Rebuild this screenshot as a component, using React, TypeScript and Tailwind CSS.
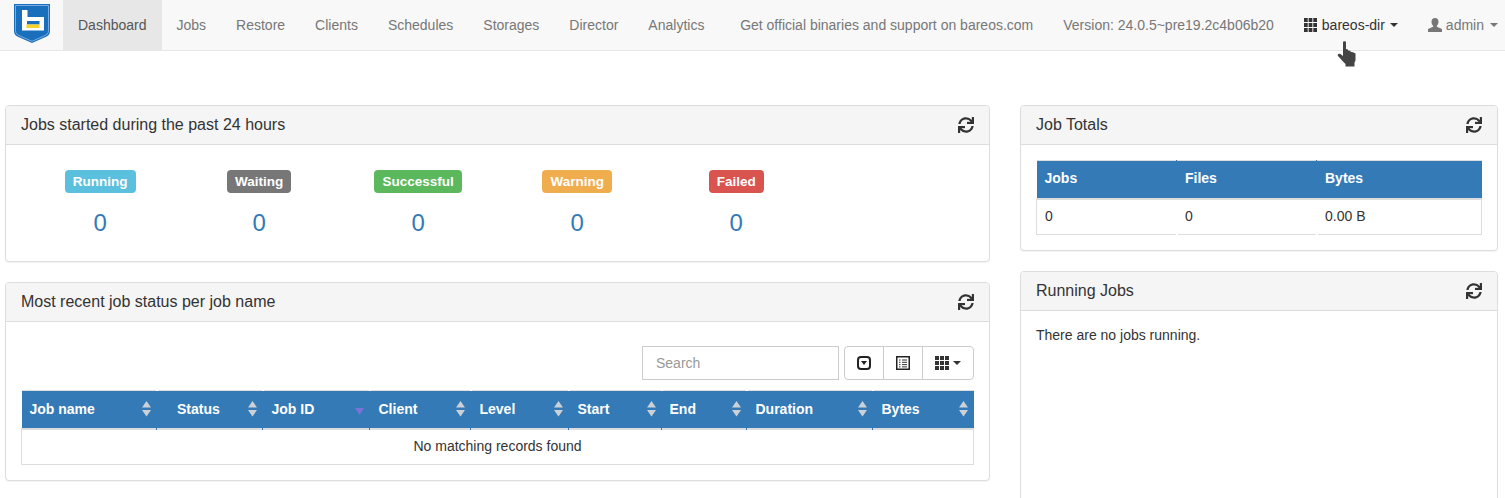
import { FaSync } from "react-icons/fa";

const navItems = ["Jobs", "Restore", "Clients", "Schedules", "Storages", "Director", "Analytics"];

const stats = [
  { label: "Running", color: "bg-[#5bc0de]" },
  { label: "Waiting", color: "bg-[#777777]" },
  { label: "Successful", color: "bg-[#5cb85c]" },
  { label: "Warning", color: "bg-[#f0ad4e]" },
  { label: "Failed", color: "bg-[#d9534f]" },
];

const jobColumns = [
  { name: "Job name", width: 135, pad: "pl-[8px]" },
  { name: "Status", width: 106, pad: "pl-[20.5px]" },
  { name: "Job ID", width: 107, pad: "pl-[9px]", active: true },
  { name: "Client", width: 101, pad: "pl-[9px]" },
  { name: "Level", width: 98, pad: "pl-[9px]" },
  { name: "Start", width: 93, pad: "pl-[9px]" },
  { name: "End", width: 85, pad: "pl-[8px]" },
  { name: "Duration", width: 126, pad: "pl-[9px]" },
  { name: "Bytes", width: 101, pad: "pl-[9px]" },
];

const totalColumns = [
  { name: "Jobs", value: "0", width: 140.5 },
  { name: "Files", value: "0", width: 140 },
  { name: "Bytes", value: "0.00 B", width: 164.5 },
];

function Logo() {
  return (
    <svg width="36" height="39" viewBox="0 0 36 39" className="block">
      <path d="M0 0H36V27C36 30.5 34 32 31 33.2L18 39L5 33.2C2 32 0 30.5 0 27Z" fill="#1a6fbd" />
      <path d="M1.5 1.5H34.5V26.5C34.5 29.5 32.8 30.8 30 32L18 37.3L6 32C3.2 30.8 1.5 29.5 1.5 26.5Z" fill="none" stroke="#8fbde6" strokeWidth="0.8" />
      <path d="M8 6H13.5V13H30V26.5H8Z" fill="#ffffff" />
      <rect x="13" y="17" width="12.5" height="3.5" fill="#1a6fbd" />
      <rect x="12.5" y="20.5" width="13" height="3.5" fill="#f5d327" />
    </svg>
  );
}

function GridIcon({ size = 14 }: { size?: number }) {
  const cells = [0, 5, 10];
  return (
    <svg width={size} height={14} viewBox="0 0 14 14" preserveAspectRatio="none" className="block">
      {cells.map((y) => cells.map((x) => <rect key={`${x}-${y}`} x={x} y={y} width="4" height="4" fill="#333333" />))}
    </svg>
  );
}

function Caret({ color = "#333333" }: { color?: string }) {
  return (
    <svg width="8" height="4" viewBox="0 0 8 4" className="block">
      <path d="M0 0H8L4 4Z" fill={color} />
    </svg>
  );
}

function UserIcon() {
  return (
    <svg width="14" height="14" viewBox="0 0 14 14" className="block">
      <path d="M7 0C9.2 0 10.5 1.6 10.5 3.8C10.5 5.6 9.7 7 8.9 7.8V8.8L14 11V14H0V11L5.1 8.8V7.8C4.3 7 3.5 5.6 3.5 3.8C3.5 1.6 4.8 0 7 0Z" fill="#777777" />
    </svg>
  );
}

function HandCursor() {
  return (
    <svg width="20" height="26" viewBox="0 0 20 26" className="absolute left-[1337px] top-[41px]">
      <path
        d="M6 1C6 0 9 0 9 1V8L11 8.5V9.5L13.5 9.8V10.8L16 11.3L18.5 12.5V19.5L17.5 21.5V25.5H8.5V23L6 20.5L1 15C0 13.5 1.5 12 3.5 13L6 15Z"
        fill="#444444"
      />
    </svg>
  );
}

function SortIcon({ active }: { active?: boolean }) {
  if (active) {
    return (
      <svg width="9" height="7" viewBox="0 0 9 7" className="absolute right-[6px] top-[17px]">
        <path d="M0 0H9L4.5 7Z" fill="#7b71d8" />
      </svg>
    );
  }
  return (
    <svg width="9" height="16" viewBox="0 0 9 16" className="absolute right-[6px] top-[10px]">
      <path d="M4.5 0L9 6.5H0Z" fill="#cdd1d6" />
      <path d="M0 9H9L4.5 15.5Z" fill="#cdd1d6" />
    </svg>
  );
}

function Panel({ title, className, children }: { title: string; className?: string; children: React.ReactNode }) {
  return (
    <section className={`rounded-[4px] border border-[#dddddd] bg-white shadow-[0_1px_1px_rgba(0,0,0,0.05)] ${className ?? ""}`}>
      <div className="flex h-[39px] items-center justify-between rounded-t-[3px] border-b border-[#dddddd] bg-[#f5f5f5] px-[15px] text-[16px] text-[#333333]">
        <span>{title}</span>
        <FaSync className="text-[16px] text-[#333333]" />
      </div>
      {children}
    </section>
  );
}

export default function App() {
  return (
    <div className="relative h-[498px] overflow-hidden bg-white font-['Liberation_Sans',sans-serif] text-[14px] text-[#333333]">
      <nav className="flex h-[51px] border-b border-[#e7e7e7] bg-[#f8f8f8] text-[#777777]">
        <div className="flex w-[63px] pl-[14px] pt-[4px]">
          <Logo />
        </div>
        <a className="flex items-center bg-[#e7e7e7] px-[15px] text-[#555555]">Dashboard</a>
        {navItems.map((item) => (
          <a key={item} className="flex items-center px-[15px]">
            {item}
          </a>
        ))}
        <div className="ml-auto flex">
          <a className="flex items-center px-[15px]">Get official binaries and support on bareos.com</a>
          <a className="flex items-center px-[15px]">Version: 24.0.5~pre19.2c4b06b20</a>
          <a className="flex items-center gap-[5px] pl-[15px] pr-[15px] text-[#333333]">
            <GridIcon size={13} />
            <span>bareos-dir</span>
            <Caret />
          </a>
          <a className="flex items-center gap-[4px] pl-[15px] pr-[7px]">
            <UserIcon />
            <span>admin</span>
            <span className="ml-[2px]">
              <Caret color="#777777" />
            </span>
          </a>
        </div>
      </nav>

      <main className="flex gap-[30px] pl-[5px] pt-[54px]">
        <div className="flex w-[985px] flex-col gap-[20px]">
          <Panel title="Jobs started during the past 24 hours">
            <div className="flex h-[116px] pl-[14.7px] pt-[25px]">
              {stats.map((stat) => (
                <div key={stat.label} className="flex w-[159px] flex-col items-center">
                  <span className={`rounded-[4px] px-[8.1px] py-[4px] text-[13.5px] font-bold leading-[15px] text-white ${stat.color}`}>
                    {stat.label}
                  </span>
                  <span className="mt-[12px] text-[24px] leading-[36px] text-[#337ab7]">0</span>
                </div>
              ))}
            </div>
          </Panel>

          <Panel title="Most recent job status per job name">
            <div className="px-[15px] pb-[15px] pt-[24px]">
              <div className="flex justify-end gap-[5px]">
                <input
                  placeholder="Search"
                  className="h-[34px] w-[197px] border border-[#cccccc] px-[13px] text-[14px] outline-none placeholder:text-[#999999]"
                />
                <div className="flex h-[34px] rounded-[4px] border border-[#cccccc] text-[#333333]">
                  <div className="flex w-[39px] items-center justify-center border-r border-[#cccccc]">
                    <svg width="14" height="14" viewBox="0 0 14 14" className="block">
                      <rect x="1" y="1" width="12" height="12" rx="3" fill="none" stroke="#222222" strokeWidth="2" />
                      <path d="M4 5H10L7 9Z" fill="#222222" />
                    </svg>
                  </div>
                  <div className="flex w-[39px] items-center justify-center border-r border-[#cccccc]">
                    <svg width="14" height="14" viewBox="0 0 14 14" className="block">
                      <rect x="0.75" y="0.75" width="12.5" height="12.5" fill="none" stroke="#222222" strokeWidth="1.5" />
                      <path d="M3 4H4.5M6 4H11M3 6.3H4.5M6 6.3H11M3 8.6H4.5M6 8.6H11M3 10.9H4.5M6 10.9H11" stroke="#333333" />
                    </svg>
                  </div>
                  <div className="flex w-[50px] items-center justify-center gap-[4px]">
                    <GridIcon />
                    <Caret />
                  </div>
                </div>
              </div>
              <table className="mt-[10px] w-[952px] table-fixed">
                <colgroup>
                  {jobColumns.map((col) => (
                    <col key={col.name} style={{ width: col.width }} />
                  ))}
                </colgroup>
                <thead>
                  <tr className="bg-[#337ab7] text-left font-bold text-white">
                    {jobColumns.map((col, i) => (
                      <th key={col.name} className={`relative h-[38px] border-b-2 border-t border-[#dddddd] py-0 pr-0 ${col.pad}`}>
                        {i > 0 && <span className="absolute left-[-1px] top-[-1px] h-px w-[2px] bg-white" />}
                        {i > 0 && <span className="absolute bottom-[-2px] left-[-1px] h-[2px] w-px bg-[#337ab7]" />}
                        {col.name}
                        <SortIcon active={col.active} />
                      </th>
                    ))}
                  </tr>
                </thead>
                <tbody>
                  <tr>
                    <td colSpan={9} className="h-[36px] border-x border-b border-[#dddddd] text-center">
                      No matching records found
                    </td>
                  </tr>
                </tbody>
              </table>
            </div>
          </Panel>
        </div>

        <div className="flex w-[478px] flex-col gap-[20px]">
          <Panel title="Job Totals">
            <div className="px-[15px] pb-[15px] pt-[15px]">
              <table className="w-full table-fixed">
                <colgroup>
                  {totalColumns.map((col) => (
                    <col key={col.name} style={{ width: col.width }} />
                  ))}
                </colgroup>
                <thead>
                  <tr className="bg-[#337ab7] text-left font-bold text-white">
                    {totalColumns.map((col, i) => (
                      <th key={col.name} className="relative h-[38px] border-b-2 border-t border-[#dddddd] pb-[2px] pl-[8px]">
                        {i > 0 && <span className="absolute left-[-1px] top-[-1px] h-px w-px bg-[#337ab7]" />}
                        {col.name}
                      </th>
                    ))}
                  </tr>
                </thead>
                <tbody>
                  <tr>
                    {totalColumns.map((col, i) => (
                      <td
                        key={col.name}
                        className={`relative h-[36px] border-b border-[#dddddd] pl-[8px] ${i === 0 ? "border-l" : ""} ${i === 2 ? "border-r" : ""}`}
                      >
                        {i > 0 && <span className="absolute bottom-[-1px] left-[-1px] h-px w-[2px] bg-white" />}
                        {col.value}
                      </td>
                    ))}
                  </tr>
                </tbody>
              </table>
            </div>
          </Panel>
          <Panel title="Running Jobs" className="h-[300px]">
            <p className="px-[15px] pt-[14px] leading-[20px]">There are no jobs running.</p>
          </Panel>
        </div>
      </main>

      <HandCursor />
    </div>
  );
}
